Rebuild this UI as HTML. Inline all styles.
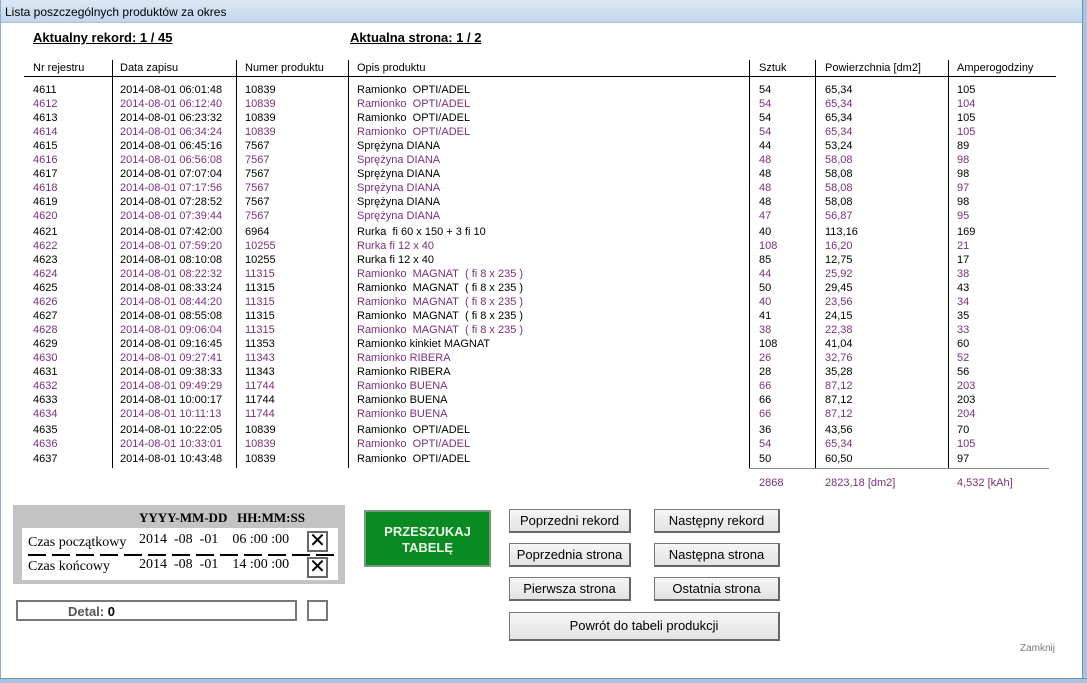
<!DOCTYPE html>
<html><head><meta charset="utf-8"><style>
*{margin:0;padding:0;box-sizing:border-box}
body{width:1087px;height:683px;background:#fff;position:relative;overflow:hidden;font-family:"Liberation Sans",Arial,sans-serif;font-size:11px;color:#000}
.a{position:absolute;white-space:nowrap}
.tb{position:absolute;left:0;top:0;width:1087px;height:23px;background:linear-gradient(#dbe8f5,#c2d6ec);border-bottom:1px solid #a9c0da;font-size:12px;padding:5px 0 0 5px}
.rb{position:absolute;right:0;top:0;width:5px;height:683px;background:#a9c4e2;border-left:1px solid #6f8fb3}
.bb{position:absolute;left:0;bottom:0;width:1087px;height:5px;background:#a9c4e2;border-top:1px solid #6f8fb3}
.lb{position:absolute;left:0;top:0;width:1px;height:683px;background:#8fa9c8}
.hd{font-weight:bold;font-size:13px;text-decoration:underline}
.vl{position:absolute;width:1px;background:#000;top:60px;height:408px}
.r{position:absolute;left:0;width:1087px;height:14px;line-height:14px;margin-top:1px}
.r span{position:absolute;top:0}
.p{color:#7a2f7c}
.c1{left:33px}.c2{left:120px}.c3{left:245px}.c4{left:357px}.c5{left:759px}.c6{left:825px}.c7{left:957px}
.btn{position:absolute;background:linear-gradient(#f6f6f6,#e3e3e3);border:1px solid #777;border-right:2px solid #666;border-bottom:2px solid #666;font-size:13px;text-align:center;line-height:21px}
.ser{font-family:"Liberation Serif","Times New Roman",serif}
.xb{position:absolute;width:21px;height:21px;border:2px solid #666;background:#fff;font-size:20px;line-height:17px;text-align:center;font-family:"Liberation Sans",sans-serif}
</style></head><body>
<div class="tb">Lista poszczególnych produktów za okres</div>
<div class="lb"></div><div class="rb"></div><div class="bb"></div>

<div class="a hd" style="left:33px;top:30px">Aktualny rekord: 1 / 45</div>
<div class="a hd" style="left:350px;top:30px">Aktualna strona: 1 / 2</div>

<div class="a" style="left:33px;top:62px">Nr rejestru</div>
<div class="a" style="left:120px;top:62px">Data zapisu</div>
<div class="a" style="left:245px;top:62px">Numer produktu</div>
<div class="a" style="left:357px;top:62px">Opis produktu</div>
<div class="a" style="left:759px;top:62px">Sztuk</div>
<div class="a" style="left:825px;top:62px">Powierzchnia [dm2]</div>
<div class="a" style="left:957px;top:62px">Amperogodziny</div>
<div class="a" style="left:24px;top:76px;width:1032px;height:1px;background:#000"></div>
<div class="vl" style="left:112px"></div><div class="vl" style="left:236px"></div><div class="vl" style="left:348px"></div><div class="vl" style="left:749px"></div><div class="vl" style="left:815px"></div><div class="vl" style="left:948px"></div>
<div class="a" style="left:749px;top:468px;width:300px;height:1px;background:#888"></div>

<div class="r" style="top:82px"><span class="c1">4611</span><span class="c2">2014-08-01 06:01:48</span><span class="c3">10839</span><span class="c4">Ramionko&nbsp; OPTI/ADEL</span><span class="c5">54</span><span class="c6">65,34</span><span class="c7">105</span></div>
<div class="r p" style="top:96px"><span class="c1">4612</span><span class="c2">2014-08-01 06:12:40</span><span class="c3">10839</span><span class="c4">Ramionko&nbsp; OPTI/ADEL</span><span class="c5">54</span><span class="c6">65,34</span><span class="c7">104</span></div>
<div class="r" style="top:110px"><span class="c1">4613</span><span class="c2">2014-08-01 06:23:32</span><span class="c3">10839</span><span class="c4">Ramionko&nbsp; OPTI/ADEL</span><span class="c5">54</span><span class="c6">65,34</span><span class="c7">105</span></div>
<div class="r p" style="top:124px"><span class="c1">4614</span><span class="c2">2014-08-01 06:34:24</span><span class="c3">10839</span><span class="c4">Ramionko&nbsp; OPTI/ADEL</span><span class="c5">54</span><span class="c6">65,34</span><span class="c7">105</span></div>
<div class="r" style="top:138px"><span class="c1">4615</span><span class="c2">2014-08-01 06:45:16</span><span class="c3">7567</span><span class="c4">Sprężyna DIANA</span><span class="c5">44</span><span class="c6">53,24</span><span class="c7">89</span></div>
<div class="r p" style="top:152px"><span class="c1">4616</span><span class="c2">2014-08-01 06:56:08</span><span class="c3">7567</span><span class="c4">Sprężyna DIANA</span><span class="c5">48</span><span class="c6">58,08</span><span class="c7">98</span></div>
<div class="r" style="top:166px"><span class="c1">4617</span><span class="c2">2014-08-01 07:07:04</span><span class="c3">7567</span><span class="c4">Sprężyna DIANA</span><span class="c5">48</span><span class="c6">58,08</span><span class="c7">98</span></div>
<div class="r p" style="top:180px"><span class="c1">4618</span><span class="c2">2014-08-01 07:17:56</span><span class="c3">7567</span><span class="c4">Sprężyna DIANA</span><span class="c5">48</span><span class="c6">58,08</span><span class="c7">97</span></div>
<div class="r" style="top:194px"><span class="c1">4619</span><span class="c2">2014-08-01 07:28:52</span><span class="c3">7567</span><span class="c4">Sprężyna DIANA</span><span class="c5">48</span><span class="c6">58,08</span><span class="c7">98</span></div>
<div class="r p" style="top:208px"><span class="c1">4620</span><span class="c2">2014-08-01 07:39:44</span><span class="c3">7567</span><span class="c4">Sprężyna DIANA</span><span class="c5">47</span><span class="c6">56,87</span><span class="c7">95</span></div>
<div class="r" style="top:224px"><span class="c1">4621</span><span class="c2">2014-08-01 07:42:00</span><span class="c3">6964</span><span class="c4">Rurka&nbsp; fi 60 x 150 + 3 fi 10</span><span class="c5">40</span><span class="c6">113,16</span><span class="c7">169</span></div>
<div class="r p" style="top:238px"><span class="c1">4622</span><span class="c2">2014-08-01 07:59:20</span><span class="c3">10255</span><span class="c4">Rurka fi 12 x 40</span><span class="c5">108</span><span class="c6">16,20</span><span class="c7">21</span></div>
<div class="r" style="top:252px"><span class="c1">4623</span><span class="c2">2014-08-01 08:10:08</span><span class="c3">10255</span><span class="c4">Rurka fi 12 x 40</span><span class="c5">85</span><span class="c6">12,75</span><span class="c7">17</span></div>
<div class="r p" style="top:266px"><span class="c1">4624</span><span class="c2">2014-08-01 08:22:32</span><span class="c3">11315</span><span class="c4">Ramionko&nbsp; MAGNAT&nbsp; ( fi 8 x 235 )</span><span class="c5">44</span><span class="c6">25,92</span><span class="c7">38</span></div>
<div class="r" style="top:280px"><span class="c1">4625</span><span class="c2">2014-08-01 08:33:24</span><span class="c3">11315</span><span class="c4">Ramionko&nbsp; MAGNAT&nbsp; ( fi 8 x 235 )</span><span class="c5">50</span><span class="c6">29,45</span><span class="c7">43</span></div>
<div class="r p" style="top:294px"><span class="c1">4626</span><span class="c2">2014-08-01 08:44:20</span><span class="c3">11315</span><span class="c4">Ramionko&nbsp; MAGNAT&nbsp; ( fi 8 x 235 )</span><span class="c5">40</span><span class="c6">23,56</span><span class="c7">34</span></div>
<div class="r" style="top:308px"><span class="c1">4627</span><span class="c2">2014-08-01 08:55:08</span><span class="c3">11315</span><span class="c4">Ramionko&nbsp; MAGNAT&nbsp; ( fi 8 x 235 )</span><span class="c5">41</span><span class="c6">24,15</span><span class="c7">35</span></div>
<div class="r p" style="top:322px"><span class="c1">4628</span><span class="c2">2014-08-01 09:06:04</span><span class="c3">11315</span><span class="c4">Ramionko&nbsp; MAGNAT&nbsp; ( fi 8 x 235 )</span><span class="c5">38</span><span class="c6">22,38</span><span class="c7">33</span></div>
<div class="r" style="top:336px"><span class="c1">4629</span><span class="c2">2014-08-01 09:16:45</span><span class="c3">11353</span><span class="c4">Ramionko kinkiet MAGNAT</span><span class="c5">108</span><span class="c6">41,04</span><span class="c7">60</span></div>
<div class="r p" style="top:350px"><span class="c1">4630</span><span class="c2">2014-08-01 09:27:41</span><span class="c3">11343</span><span class="c4">Ramionko RIBERA</span><span class="c5">26</span><span class="c6">32,76</span><span class="c7">52</span></div>
<div class="r" style="top:364px"><span class="c1">4631</span><span class="c2">2014-08-01 09:38:33</span><span class="c3">11343</span><span class="c4">Ramionko RIBERA</span><span class="c5">28</span><span class="c6">35,28</span><span class="c7">56</span></div>
<div class="r p" style="top:378px"><span class="c1">4632</span><span class="c2">2014-08-01 09:49:29</span><span class="c3">11744</span><span class="c4">Ramionko BUENA</span><span class="c5">66</span><span class="c6">87,12</span><span class="c7">203</span></div>
<div class="r" style="top:392px"><span class="c1">4633</span><span class="c2">2014-08-01 10:00:17</span><span class="c3">11744</span><span class="c4">Ramionko BUENA</span><span class="c5">66</span><span class="c6">87,12</span><span class="c7">203</span></div>
<div class="r p" style="top:406px"><span class="c1">4634</span><span class="c2">2014-08-01 10:11:13</span><span class="c3">11744</span><span class="c4">Ramionko BUENA</span><span class="c5">66</span><span class="c6">87,12</span><span class="c7">204</span></div>
<div class="r" style="top:422px"><span class="c1">4635</span><span class="c2">2014-08-01 10:22:05</span><span class="c3">10839</span><span class="c4">Ramionko&nbsp; OPTI/ADEL</span><span class="c5">36</span><span class="c6">43,56</span><span class="c7">70</span></div>
<div class="r p" style="top:436px"><span class="c1">4636</span><span class="c2">2014-08-01 10:33:01</span><span class="c3">10839</span><span class="c4">Ramionko&nbsp; OPTI/ADEL</span><span class="c5">54</span><span class="c6">65,34</span><span class="c7">105</span></div>
<div class="r" style="top:451px"><span class="c1">4637</span><span class="c2">2014-08-01 10:43:48</span><span class="c3">10839</span><span class="c4">Ramionko&nbsp; OPTI/ADEL</span><span class="c5">50</span><span class="c6">60,50</span><span class="c7">97</span></div>

<div class="r p" style="top:475px"><span class="c5">2868</span><span class="c6">2823,18 [dm2]</span><span class="c7">4,532 [kAh]</span></div>

<div class="a" style="left:13px;top:505px;width:332px;height:79px;background:#c3c3c3"></div>
<div class="a ser" style="left:139px;top:510px;font-size:13px;font-weight:bold">YYYY-MM-DD&nbsp;&nbsp; HH:MM:SS</div>
<div class="a" style="left:22px;top:528px;width:316px;height:52px;background:#fff"></div>
<div class="a ser" style="left:28px;top:535px;font-size:14px">Czas początkowy</div>
<div class="a ser" style="left:139px;top:532px;font-size:14px">2014&nbsp; -08&nbsp; -01&nbsp;&nbsp;&nbsp; 06 :00 :00</div>
<div class="a" style="left:28px;top:554px;width:306px;height:2px;background:repeating-linear-gradient(90deg,#000 0 18px,transparent 18px 24px)"></div>
<div class="a ser" style="left:28px;top:559px;font-size:14px">Czas końcowy</div>
<div class="a ser" style="left:139px;top:557px;font-size:14px">2014&nbsp; -08&nbsp; -01&nbsp;&nbsp;&nbsp; 14 :00 :00</div>
<div class="xb" style="left:307px;top:531px">✕</div>
<div class="xb" style="left:307px;top:557px">✕</div>

<div class="a" style="left:16px;top:600px;width:281px;height:21px;border:2px solid #777;background:#fff;font-size:13px;font-weight:bold;color:#555;padding:2px 0 0 50px">Detal: <span style="color:#000">0</span></div>
<div class="a" style="left:307px;top:600px;width:21px;height:21px;border:2px solid #777;background:#fff"></div>

<div class="a" style="left:364px;top:510px;width:127px;height:57px;background:#0a8a22;border:2px solid #7a9a80;color:#e8f5e8;font-weight:bold;font-size:13px;text-align:center;line-height:16px;padding-top:12px;white-space:normal">PRZESZUKAJ<br>TABELĘ</div>

<div class="btn" style="left:509px;top:509px;width:122px;height:24px">Poprzedni rekord</div>
<div class="btn" style="left:654px;top:509px;width:126px;height:24px">Następny rekord</div>
<div class="btn" style="left:509px;top:543px;width:122px;height:24px">Poprzednia strona</div>
<div class="btn" style="left:654px;top:543px;width:126px;height:24px">Następna strona</div>
<div class="btn" style="left:509px;top:577px;width:122px;height:24px">Pierwsza strona</div>
<div class="btn" style="left:654px;top:577px;width:126px;height:24px">Ostatnia strona</div>
<div class="btn" style="left:509px;top:612px;width:271px;height:29px;line-height:26px">Powrót do tabeli produkcji</div>

<div class="a" style="left:1020px;top:643px;font-size:10px;color:#777">Zamknij</div>
</body></html>
